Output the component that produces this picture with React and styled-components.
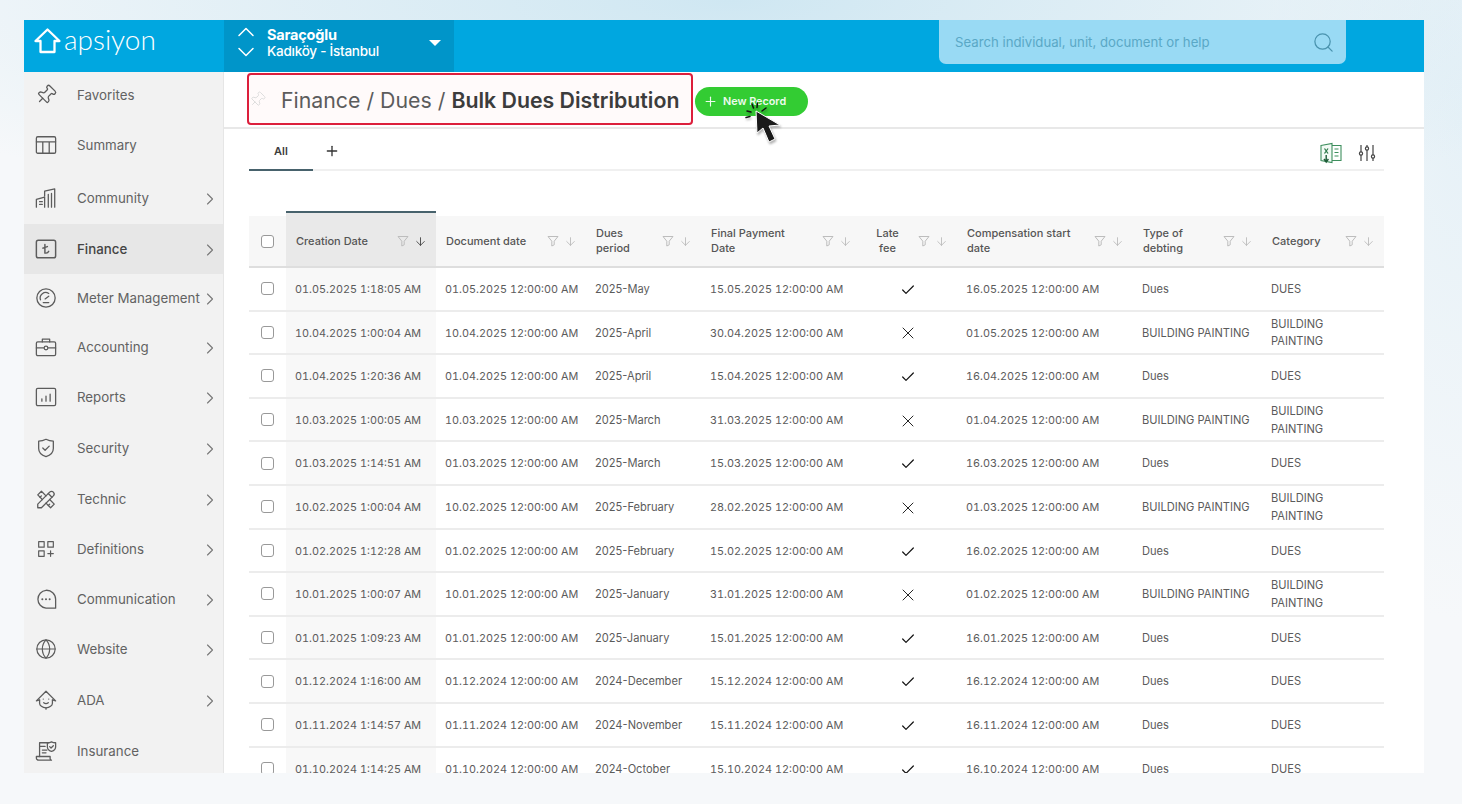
import styled, { createGlobalStyle } from "styled-components";
import {
  ArrowDown,
  Check,
  ChevronDown,
  ChevronRight,
  ChevronUp,
  Globe,
  Pin,
  Plus,
  Search,
  X,
} from "lucide-react";
import { TbCategoryPlus, TbTools } from "react-icons/tb";

const GlobalStyle = createGlobalStyle`
  html, body {
    margin: 0;
    padding: 0;
    height: 100%;
    overflow: hidden;
    font-family: "Inter", "Liberation Sans", sans-serif;
  }
  * { box-sizing: border-box; }
`;

const Page = styled.div`
  width: 1462px;
  height: 804px;
  padding: 20px 38px 31px 24px;
  background:
    radial-gradient(ellipse 950px 240px at 50% 0, #cfe7f2 0, rgba(207, 231, 242, 0) 100%),
    radial-gradient(ellipse 200px 500px at 100% 120px, #e6f1f7 0, rgba(230, 241, 247, 0) 100%),
    #f6f8fa;
`;

const Frame = styled.div`
  height: 753px;
  background: #fff;
  display: grid;
  grid-template-columns: 200px 1fr;
  grid-template-rows: 52px 1fr;
  overflow: hidden;
`;

const TopBar = styled.header`
  grid-column: 1 / 3;
  background: #00a7e0;
  display: flex;
  color: #fff;
`;

const Logo = styled.div`
  width: 200px;
  display: flex;
  align-items: center;
  padding: 0 0 14px 10px;
  gap: 3px;
  font-family: "Lato", sans-serif;
  font-weight: 300;
  font-size: 28px;
  svg { margin-top: 4px; }
`;

const Community = styled.div`
  width: 230px;
  background: #0095c9;
  display: flex;
  align-items: center;
  padding-left: 8px;
`;

const Stepper = styled.div`
  width: 28px;
  display: flex;
  flex-direction: column;
  margin: -8px 7px 0 0;
  svg + svg { margin-top: -8px; }
`;

const CommunityText = styled.div`
  flex: 1;
  margin-top: -7px;
  strong {
    display: block;
    font-size: 14.5px;
    font-weight: 700;
    line-height: 17px;
    letter-spacing: -0.2px;
  }
  span {
    display: block;
    font-size: 13.5px;
    font-weight: 500;
    line-height: 17px;
    letter-spacing: -0.25px;
  }
`;

const Caret = styled.i`
  width: 0;
  height: 0;
  margin-right: 13px;
  margin-top: -6px;
  border-left: 6px solid transparent;
  border-right: 6px solid transparent;
  border-top: 6px solid #fff;
`;

const SearchBox = styled.div`
  width: 407px;
  height: 44px;
  margin-left: 485px;
  padding: 0 11px 0 16px;
  border-radius: 0 0 7px 7px;
  background: #99daf4;
  color: #5aa8c6;
  font-size: 13.2px;
  display: flex;
  align-items: center;
  justify-content: space-between;
  svg { color: #4a93ae; }
`;

const Sidebar = styled.nav`
  background: #f2f2f2;
  border-right: 1px solid #e6e6e6;
  overflow: hidden;
`;

const NavItem = styled.div`
  height: ${(p) => p.$h}px;
  padding: 0 8px 0 11px;
  display: flex;
  align-items: center;
  color: ${(p) => (p.$active ? "#444" : "#626262")};
  font-size: 13.3px;
  font-weight: ${(p) => (p.$active ? 500 : 400)};
  background: ${(p) => (p.$active ? "#e7e7e7" : "transparent")};
  white-space: nowrap;
`;

const NavIcon = styled.span`
  width: 22px;
  height: 22px;
  margin-right: 20px;
  flex: none;
  display: flex;
  align-items: center;
  justify-content: center;
  color: #5c5c5c;
`;

const NavLabel = styled.span`
  flex: 1;
`;

const Chevron = styled(ChevronRight)`
  color: #777;
  margin-top: 2px;
  margin-right: -5px;
  flex: none;
`;

const TiltedPin = styled(Pin)`
  transform: rotate(45deg);
`;

const Main = styled.main`
  overflow: hidden;
  min-width: 0;
`;

const TitleRow = styled.div`
  height: 57px;
  padding: 1px 0 0 23px;
  border-bottom: 2px solid #e8e8e8;
  display: flex;
  align-items: flex-start;
  position: relative;
`;

const Breadcrumb = styled.div`
  width: 446px;
  height: 52px;
  padding: 1px 0 0 0;
  border: 2px solid #dc1f3c;
  border-radius: 4px;
  background: #fffafa;
  display: flex;
  align-items: center;
  font-size: 21.3px;
  color: #5c5c5c;
  white-space: pre;
  svg { color: #dcdcdc; margin-right: 15px; flex: none; }
  b { color: #3c3c3c; font-weight: 600; }
`;

const NewButton = styled.button`
  margin: 14px 0 0 2px;
  width: 113px;
  height: 29px;
  padding: 0 0 0 8px;
  border: 0;
  border-radius: 15px;
  background: #33cc33;
  color: #eefbee;
  font: 600 10.8px "Inter", sans-serif;
  display: flex;
  align-items: center;
  gap: 5px;
`;

const PointerMark = styled.svg`
  position: absolute;
  left: 511px;
  top: 26px;
  filter: drop-shadow(1px 2px 1px rgba(0, 0, 0, 0.3));
`;

const TabsRow = styled.div`
  height: 42px;
  margin: 0 40px 0 25px;
  border-bottom: 2px solid #f0f0f0;
  display: flex;
  align-items: stretch;
`;

const Tab = styled.div`
  width: 64px;
  margin-bottom: -2px;
  border-bottom: 2px solid #47626c;
  font-size: 11px;
  font-weight: 600;
  color: #3d3d3d;
  display: flex;
  align-items: center;
  justify-content: center;
  padding-top: 4px;
`;

const AddTab = styled.div`
  width: 38px;
  display: flex;
  align-items: center;
  justify-content: center;
  color: #333;
  padding-top: 4px;
`;

const TabActions = styled.div`
  margin-left: auto;
  display: flex;
  align-items: center;
  gap: 16px;
  padding: 8px 8px 0 0;
`;

const TableWrap = styled.div`
  margin: 45px 40px 0 25px;
`;

const Table = styled.table`
  width: 1135px;
  table-layout: fixed;
  border-collapse: collapse;
  font-size: 11.1px;
  color: #5b5b5b;
`;

const Th = styled.th`
  height: 51px;
  padding: 0 9px 0 10px;
  background: ${(p) => (p.$active ? "#e9e9e9" : "#f7f7f7")};
  border-bottom: 2px solid #dedede;
  font-weight: 500;
  text-align: left;
  position: relative;
  ${(p) =>
    p.$active &&
    `&::before {
      content: "";
      position: absolute;
      left: 0;
      right: 0;
      top: -5px;
      height: 5px;
      background: #e9e9e9;
      border-top: 2px solid #47626c;
    }`}
`;

const HeadInner = styled.div`
  display: flex;
  align-items: center;
  font-size: 11px;
  line-height: 15px;
  color: #555;
`;

const HeadLabel = styled.span`
  flex: 1;
  padding-right: ${(p) => (p.$center ? "14px" : "10px")};
  text-align: ${(p) => (p.$center ? "center" : "left")};
`;

const HeadIcons = styled.span`
  flex: none;
  width: 30px;
  display: flex;
  align-items: center;
  justify-content: space-between;
  color: #bdbdbd;
`;

const SortArrow = styled(ArrowDown)`
  color: ${(p) => (p.$active ? "#333" : "#b5b5b5")};
`;

const Td = styled.td`
  height: 43.6px;
  padding: 2px ${(p) => (p.$center ? "11px" : p.$wrap ? "40px" : "2px")} 0 9px;
  border-bottom: 2px solid #ececec;
  line-height: 17.5px;
  background: ${(p) => (p.$active ? "#f8f8f8" : "transparent")};
  text-align: ${(p) => (p.$center ? "center" : "left")};
  color: #5b5b5b;
  white-space: ${(p) => (p.$wrap ? "normal" : "nowrap")};
  svg { vertical-align: middle; color: #111; }
`;

// the date columns have digits of one width, so every row ends at the same x
const DateTd = styled(Td)`
  font-size: 10.85px;
  font-variant-numeric: tabular-nums;
`;

const BoxCell = styled.td`
  height: 43.6px;
  padding: 0 0 0 12px;
  border-bottom: 2px solid #ececec;
`;

const BoxHead = styled.th`
  padding: 0 0 0 12px;
  background: #f7f7f7;
  border-bottom: 2px solid #dedede;
`;

const Box = styled.div`
  width: 13px;
  height: 13px;
  border: 1.5px solid #999;
  border-radius: 3px;
  background: #fff;
`;

const Ico = ({ size = 22, sw = 1.4, children }) => (
  <svg
    width={size}
    height={size}
    viewBox="0 0 24 24"
    fill="none"
    stroke="currentColor"
    strokeWidth={sw}
    strokeLinecap="round"
    strokeLinejoin="round"
  >
    {children}
  </svg>
);

const navItems = [
  { label: "Favorites", h: 46, icon: <TiltedPin size={22} strokeWidth={1.4} /> },
  {
    label: "Summary",
    h: 54,
    icon: (
      <Ico>
        <rect x="1.5" y="3" width="21" height="18" rx="1.5" />
        <path d="M1.5 8.5h21M8.5 8.5V21M15.5 8.5V21" />
      </Ico>
    ),
  },
  {
    label: "Community",
    h: 52,
    arrow: true,
    icon: (
      <Ico>
        <path d="M1.5 22v-8.5l9-2.5V22" />
        <path d="M10.5 10V4.5l11-2.5v20" />
        <path d="M5 16h3M5 19h3M14.5 8v14M18 7v15" />
      </Ico>
    ),
  },
  {
    label: "Finance",
    h: 50,
    arrow: true,
    active: true,
    icon: (
      <Ico sw={1.6}>
        <rect x="1.5" y="2.5" width="21" height="19" rx="2" />
        <path d="M10.8 7v9.5h1.2a3.5 3.5 0 0 0 3-2M8.5 11l5-1.6" />
      </Ico>
    ),
  },
  {
    label: "Meter Management",
    h: 48,
    arrow: true,
    icon: (
      <Ico>
        <circle cx="12" cy="12" r="10" />
        <path d="M6 14a6 6 0 0 1 9-7" />
        <path d="M11 13l4-3" />
        <path d="M9 17h6" />
      </Ico>
    ),
  },
  {
    label: "Accounting",
    h: 50,
    arrow: true,
    icon: (
      <Ico>
        <rect x="1.5" y="6.5" width="21" height="15" rx="1.5" />
        <path d="M8 6.5V3.5h8v3M1.5 13h8M14.5 13h8" />
        <circle cx="12" cy="13" r="2" />
      </Ico>
    ),
  },
  {
    label: "Reports",
    h: 50,
    arrow: true,
    icon: (
      <Ico>
        <rect x="1.5" y="2.5" width="21" height="19" rx="1.5" />
        <path d="M7.5 14v2.5M12 11v5.5M16.5 9v7.5" />
      </Ico>
    ),
  },
  {
    label: "Security",
    h: 52,
    arrow: true,
    icon: (
      <Ico>
        <path d="M12 2.5c3 1.6 5.5 2 8 2v8c0 4.5-3.5 7.5-8 9-4.5-1.5-8-4.5-8-9v-8c2.5 0 5-.4 8-2z" />
        <path d="M8.5 12l2.5 2.5 4.5-4.5" />
      </Ico>
    ),
  },
  { label: "Technic", h: 50, arrow: true, icon: <TbTools size={23} strokeWidth={1.4} /> },
  { label: "Definitions", h: 50, arrow: true, icon: <TbCategoryPlus size={24} strokeWidth={1.3} /> },
  {
    label: "Communication",
    h: 50,
    arrow: true,
    icon: (
      <Ico>
        <path d="M12 2.5a9.8 9.8 0 0 0 0 19.5h10.5v-9.7A9.8 9.8 0 0 0 12 2.5z" />
        <path d="M8 12.3h.01M12 12.3h.01M16 12.3h.01" strokeWidth="2.2" />
      </Ico>
    ),
  },
  { label: "Website", h: 50, arrow: true, icon: <Globe size={22} strokeWidth={1.3} /> },
  {
    label: "ADA",
    h: 52,
    arrow: true,
    icon: (
      <Ico>
        <path d="M5 12l-3.5 1L12 2.5 22.5 13 19 12" />
        <path d="M5 12v3.5c0 2.5 3 5 7 5s7-2.5 7-5V12" />
        <path d="M9 11h.01M15 11h.01M9.5 15c1.5 1.2 3.5 1.2 5 0" />
        <path d="M12 20.5V22" />
      </Ico>
    ),
  },
  {
    label: "Insurance",
    h: 50,
    icon: (
      <Ico>
        <path d="M5 18V3h10M5 7h6M8 11h5M8 14h4" />
        <path d="M1.5 18h15v2.5a1.5 1.5 0 0 0 1.5 1.5H4a2.5 2.5 0 0 1-2.5-2.5z" />
        <path d="M18 2c1.5.8 3 1 4.5 1v4.5c0 2.5-2 4-4.5 5-2.5-1-4.5-2.5-4.5-5V3c1.5 0 3-.2 4.5-1z" />
        <path d="M16 7.2l1.5 1.5 2.5-2.500" />
      </Ico>
    ),
  },
];

const columns = [
  { label: "Creation Date", active: true },
  { label: "Document date" },
  { label: <>Dues<br />period</> },
  { label: <>Final Payment<br />Date</> },
  { label: <>Late<br />fee</>, center: true },
  { label: <>Compensation start<br />date</> },
  { label: <>Type of<br />debting</> },
  { label: "Category" },
];

const colWidths = [37, 150, 150, 115, 160, 96, 176, 129, 122];

const rows = [
  ["01.05.2025 1:18:05 AM", "01.05.2025", "2025-May", "15.05.2025", true, "16.05.2025"],
  ["10.04.2025 1:00:04 AM", "10.04.2025", "2025-April", "30.04.2025", false, "01.05.2025"],
  ["01.04.2025 1:20:36 AM", "01.04.2025", "2025-April", "15.04.2025", true, "16.04.2025"],
  ["10.03.2025 1:00:05 AM", "10.03.2025", "2025-March", "31.03.2025", false, "01.04.2025"],
  ["01.03.2025 1:14:51 AM", "01.03.2025", "2025-March", "15.03.2025", true, "16.03.2025"],
  ["10.02.2025 1:00:04 AM", "10.02.2025", "2025-February", "28.02.2025", false, "01.03.2025"],
  ["01.02.2025 1:12:28 AM", "01.02.2025", "2025-February", "15.02.2025", true, "16.02.2025"],
  ["10.01.2025 1:00:07 AM", "10.01.2025", "2025-January", "31.01.2025", false, "01.02.2025"],
  ["01.01.2025 1:09:23 AM", "01.01.2025", "2025-January", "15.01.2025", true, "16.01.2025"],
  ["01.12.2024 1:16:00 AM", "01.12.2024", "2024-December", "15.12.2024", true, "16.12.2024"],
  ["01.11.2024 1:14:57 AM", "01.11.2024", "2024-November", "15.11.2024", true, "16.11.2024"],
  ["01.10.2024 1:14:25 AM", "01.10.2024", "2024-October", "15.10.2024", true, "16.10.2024"],
];

const MID = " 12:00:00 AM";

const Funnel = () => (
  <svg width="12" height="12" viewBox="0 0 12 12" fill="none" stroke="currentColor" strokeWidth="1" strokeLinejoin="round">
    <path d="M1 1.5h10L7.2 6.2v3.6L4.8 11V6.2z" />
  </svg>
);

const ExcelIcon = () => (
  <svg width="22" height="22" viewBox="0 0 22 22" fill="none" stroke="#3e8f5e" strokeWidth="1.1">
    <path d="M1 3.5L12 1.5v19L1 18.5z" fill="#f3faf5" />
    <path d="M12 3.5h9v15h-9M14.5 7h4M14.5 10.5h4M14.5 14h4" />
    <path d="M4.5 6.5l3.5 5M8 6.5l-3.5 5" stroke="#2d7a4a" strokeWidth="1.3" />
    <path d="M6.2 13v6M4 17l2.2 3 2.2-3" stroke="#1f5c38" strokeWidth="1.4" />
  </svg>
);

const SlidersIcon = () => (
  <svg width="18" height="18" viewBox="0 0 18 18" fill="none" stroke="#444" strokeWidth="1.2">
    <path d="M3 1v7M3 11v6M9 1v2M9 6v11M15 1v10M15 14v3" />
    <circle cx="3" cy="9.5" r="1.6" />
    <circle cx="9" cy="4.5" r="1.6" />
    <circle cx="15" cy="12.5" r="1.6" />
  </svg>
);

export default function App() {
  return (
    <Page>
      <GlobalStyle />
      <Frame>
        <TopBar>
          <Logo>
            <svg width="27" height="26" viewBox="0 0 27 26" fill="none" stroke="#fff" strokeWidth="2.3" strokeLinejoin="round" strokeLinecap="round">
              <path d="M13.5 1.5L1.5 13h5v11h14V13h5z" />
            </svg>
            apsiyon
          </Logo>
          <Community>
            <Stepper>
              <ChevronUp size={28} strokeWidth={1.3} />
              <ChevronDown size={28} strokeWidth={1.3} />
            </Stepper>
            <CommunityText>
              <strong>Saraçoğlu</strong>
              <span>Kadıköy - İstanbul</span>
            </CommunityText>
            <Caret />
          </Community>
          <SearchBox>
            Search individual, unit, document or help
            <Search size={23} strokeWidth={1.3} />
          </SearchBox>
        </TopBar>
        <Sidebar>
          {navItems.map((item) => (
            <NavItem key={item.label} $active={item.active} $h={item.h}>
              <NavIcon>{item.icon}</NavIcon>
              <NavLabel>{item.label}</NavLabel>
              {item.arrow && <Chevron size={20} strokeWidth={1.3} />}
            </NavItem>
          ))}
        </Sidebar>
        <Main>
          <TitleRow>
            <Breadcrumb>
              <TiltedPin size={17} strokeWidth={1.3} />
              {"Finance / Dues / "}<b>Bulk Dues Distribution</b>
            </Breadcrumb>
            <NewButton>
              <Plus size={15} strokeWidth={1.8} />
              New Record
            </NewButton>
            <PointerMark width="50" height="50" viewBox="0 0 50 50">
              <path d="M21 13l1 22 6-5 6 14 6-3-6-13 11-1z" fill="#1a1a1a" stroke="#fff" strokeWidth="1" strokeLinejoin="round" />
              <path d="M12 13l4 1M11 19.5l4-1M17 6l1.5 4M22.5 5l-.5 4.5M31 10l-4 3" stroke="#111" strokeWidth="1.5" strokeLinecap="round" />
            </PointerMark>
          </TitleRow>
          <TabsRow>
            <Tab>All</Tab>
            <AddTab><Plus size={16} strokeWidth={2} /></AddTab>
            <TabActions>
              <ExcelIcon />
              <SlidersIcon />
            </TabActions>
          </TabsRow>
          <TableWrap>
            <Table>
              <colgroup>
                {colWidths.map((w, i) => (
                  <col key={i} width={w} />
                ))}
              </colgroup>
              <thead>
                <tr>
                  <BoxHead><Box /></BoxHead>
                  {columns.map((col, i) => (
                    <Th key={i} $active={col.active}>
                      <HeadInner>
                        <HeadLabel $center={col.center}>{col.label}</HeadLabel>
                        <HeadIcons>
                          <Funnel />
                          <SortArrow size={13} strokeWidth={1.5} $active={col.active} />
                        </HeadIcons>
                      </HeadInner>
                    </Th>
                  ))}
                </tr>
              </thead>
              <tbody>
                {rows.map((r) => (
                  <tr key={r[0]}>
                    <BoxCell><Box /></BoxCell>
                    <DateTd $active>{r[0]}</DateTd>
                    <DateTd>{r[1] + MID}</DateTd>
                    <Td>{r[2]}</Td>
                    <DateTd>{r[3] + MID}</DateTd>
                    <Td $center>{r[4] ? <Check size={16} strokeWidth={1.8} /> : <X size={20} strokeWidth={1.1} />}</Td>
                    <DateTd>{r[5] + MID}</DateTd>
                    <Td>{r[4] ? "Dues" : "BUILDING PAINTING"}</Td>
                    <Td $wrap>{r[4] ? "DUES" : "BUILDING PAINTING"}</Td>
                  </tr>
                ))}
              </tbody>
            </Table>
          </TableWrap>
        </Main>
      </Frame>
    </Page>
  );
}
